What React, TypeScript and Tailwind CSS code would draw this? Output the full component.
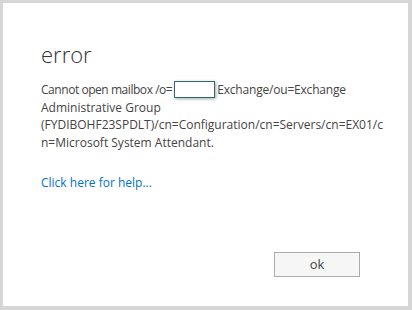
export default function App() {
  return (
    <div className="w-[412px] h-[310px] bg-[#d6d6d6] pl-[3px] pt-[3px] pr-[4px] pb-[4px] font-['Open_Sans',sans-serif]">
      <div className="h-full bg-white flex flex-col px-[38px] pt-[36px]">
        <h1 className="text-[22px] font-light text-[#333] leading-[30px]">error</h1>
        <div className="mt-[12px] text-[12px] leading-[17.5px] text-[#444] whitespace-nowrap">
          <div className="flex items-center">
            <span className="tracking-[-0.45px]">Cannot open mailbox /o=</span>
            <span className="inline-block w-[41px] h-[17px] mx-[2px] border border-[#2d6a6a] shadow-[1px_1px_3px_rgba(0,0,0,0.35)]" />
            <span className="tracking-[-0.2px]">Exchange/ou=Exchange</span>
          </div>
          <div>Administrative Group</div>
          <div>(FYDIBOHF23SPDLT)/cn=Configuration/cn=Servers/cn=EX01/c</div>
          <div>n=Microsoft System Attendant.</div>
        </div>
        <a href="#" className="mt-[23px] text-[12px] text-[#0072c6] leading-[17px] self-start">
          Click here for help...
        </a>
        <div className="mt-auto mb-[29px] flex justify-end pr-[10px]">
          <button className="w-[86px] h-[25px] border border-[#a7adad] bg-[#f6f6f6] text-[13px] text-[#444]">
            ok
          </button>
        </div>
      </div>
    </div>
  )
}
